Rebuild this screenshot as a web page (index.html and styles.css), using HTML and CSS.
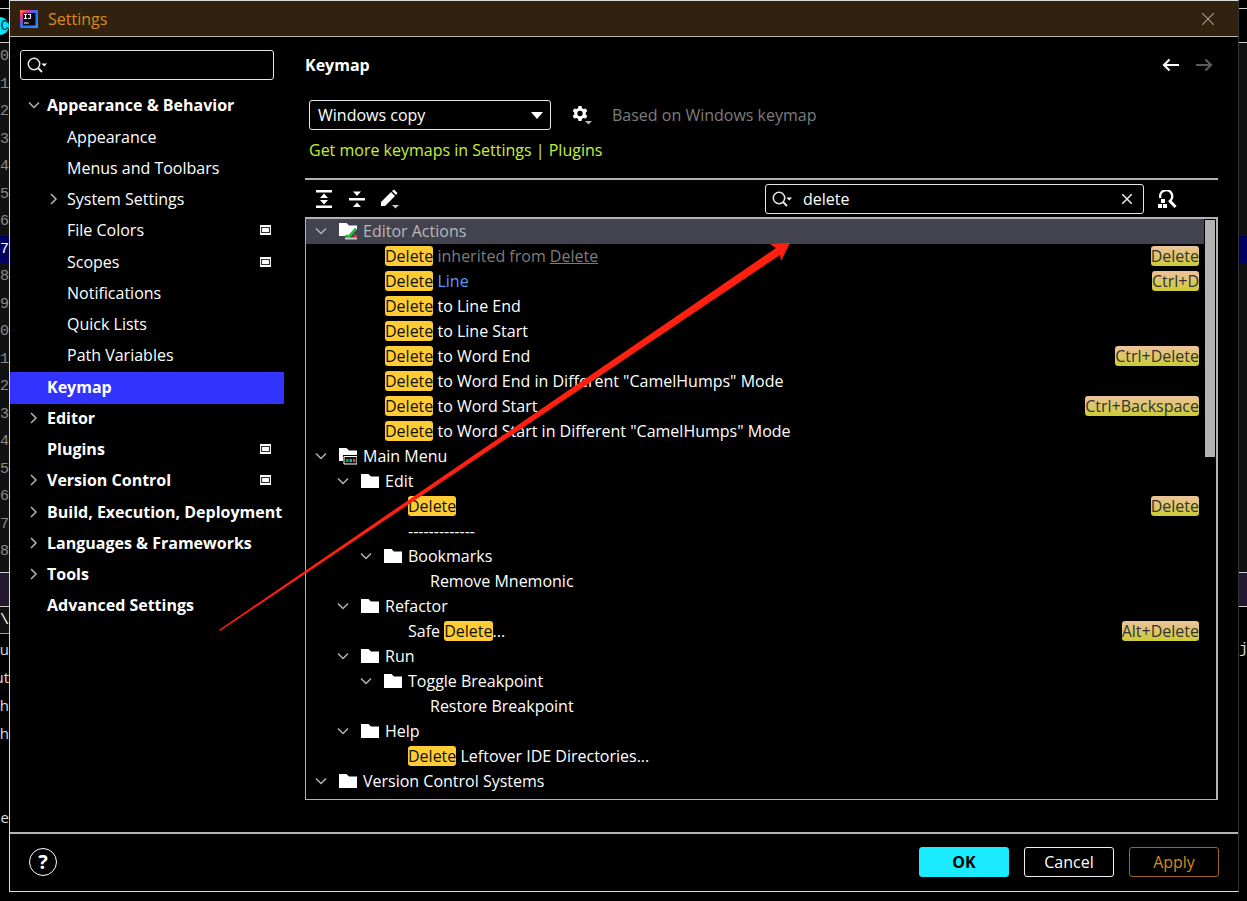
FILE: index.html
```html
<!DOCTYPE html>
<html lang="en">
<head>
<meta charset="utf-8">
<title>Settings</title>
<link rel="stylesheet" href="styles.css">
</head>
<body>
<svg width="0" height="0" class="defs" aria-hidden="true">
  <symbol id="down" viewBox="0 0 12 12"><path d="M1 3.5 6 8.5 11 3.5" fill="none" stroke="#b4b4b4" stroke-width="1.5"/></symbol>
  <symbol id="right" viewBox="0 0 12 12"><path d="M3 1 8 6 3 11" fill="none" stroke="#b4b4b4" stroke-width="1.5"/></symbol>
  <symbol id="folder" viewBox="0 0 18 16"><path d="M0 1H7.500L10 3.500H18V15H0Z" fill="#fff"/></symbol>
  <symbol id="project" viewBox="0 0 11 10"><path d="M0 0H11V10H0Z" fill="#fff"/><path d="M1.500 2.500H9.500V7.500H1.500Z" fill="#fff" stroke="#333" stroke-width="1.200"/></symbol>
  <symbol id="search" viewBox="0 0 20 16"><circle cx="7" cy="7" r="5.700" fill="none" stroke="#e8e8e8" stroke-width="1.500"/><path d="M11 11 15 15" stroke="#e8e8e8" stroke-width="2"/><path d="M14.500 6.500H20L17.200 9.500Z" fill="#fff"/></symbol>
</svg>
<div class="desktop">
  <div class="strip left" aria-hidden="true">
    <div class="tabs"><span class="badge">C</span></div>
    <div class="gutter"><span>0</span><span>1</span><span>2</span><span>3</span><span>4</span><span>5</span><span>6</span><span class="current">7</span><span>8</span><span>9</span><span>0</span><span>1</span><span>2</span><span>3</span><span>4</span><span>5</span><span>6</span><span>7</span><span>8</span></div>
    <div class="toolbar-band"></div>
    <div class="path-row">\</div>
    <div class="console"><span>au</span><span>ut</span><span>h</span><span>h</span><span></span><span></span><span>e</span></div>
  </div>

  <main class="dialog">
    <header class="titlebar">
      <svg class="logo" viewBox="0 0 18 18" width="18" height="18">
        <defs><linearGradient id="lg" x1="0" y1="0" x2="1" y2="1"><stop offset="0" stop-color="#ff8a3c"/><stop offset=".2" stop-color="#f0357a"/><stop offset=".38" stop-color="#7b4fe0"/><stop offset=".5" stop-color="#1a7bf5"/><stop offset="1" stop-color="#2196ff"/></linearGradient></defs>
        <path d="M0 0H18V18H0Z" fill="url(#lg)"/><path d="M3 3H15.500V15.500H3Z" fill="#120612"/>
        <path d="M4 4.500H7M5.500 4.500V8.500M4 8.500H7M8 4.500H10.500V7.500Q10.500 8.500 9.500 8.500H8M4 13H8.500" fill="none" stroke="#fff" stroke-width="1.100"/>
      </svg>
      <h1>Settings</h1>
      <button class="icon-btn close" aria-label="Close"><svg width="12" height="12" viewBox="0 0 12 12"><path d="M0 0 12 12M12 0 0 12" stroke="#a09890" stroke-width="1.200"/></svg></button>
    </header>

    <div class="body">
      <nav class="sidebar" aria-label="Settings categories">
        <label class="field side-search"><svg width="20" height="16"><use href="#search"/></svg><input type="text" aria-label="Search settings"></label>
        <ul class="nav">
          <li class="top"><svg class="chev"><use href="#down"/></svg><span>Appearance &amp; Behavior</span></li>
          <li class="sub"><i class="chev"></i><span>Appearance</span></li>
          <li class="sub"><i class="chev"></i><span>Menus and Toolbars</span></li>
          <li class="sub"><svg class="chev"><use href="#right"/></svg><span>System Settings</span></li>
          <li class="sub"><i class="chev"></i><span>File Colors</span><svg class="proj"><use href="#project"/></svg></li>
          <li class="sub"><i class="chev"></i><span>Scopes</span><svg class="proj"><use href="#project"/></svg></li>
          <li class="sub"><i class="chev"></i><span>Notifications</span></li>
          <li class="sub"><i class="chev"></i><span>Quick Lists</span></li>
          <li class="sub"><i class="chev"></i><span>Path Variables</span></li>
          <li class="top selected"><i class="chev"></i><span>Keymap</span></li>
          <li class="top"><svg class="chev"><use href="#right"/></svg><span>Editor</span></li>
          <li class="top"><i class="chev"></i><span>Plugins</span><svg class="proj"><use href="#project"/></svg></li>
          <li class="top"><svg class="chev"><use href="#right"/></svg><span>Version Control</span><svg class="proj"><use href="#project"/></svg></li>
          <li class="top"><svg class="chev"><use href="#right"/></svg><span>Build, Execution, Deployment</span></li>
          <li class="top"><svg class="chev"><use href="#right"/></svg><span>Languages &amp; Frameworks</span></li>
          <li class="top"><svg class="chev"><use href="#right"/></svg><span>Tools</span></li>
          <li class="top"><i class="chev"></i><span>Advanced Settings</span></li>
        </ul>
      </nav>

      <section class="content">
        <div class="heading">
          <h2>Keymap</h2>
          <button class="icon-btn" aria-label="Back"><svg width="18" height="14" viewBox="0 0 18 14"><path d="M17 7H2M7.500 1.500 2 7 7.500 12.500" fill="none" stroke="#fff" stroke-width="2.200"/></svg></button>
          <button class="icon-btn" aria-label="Forward" disabled><svg width="18" height="14" viewBox="0 0 18 14"><path d="M1 7H16M10.500 1.500 16 7 10.500 12.500" fill="none" stroke="#5c5c5c" stroke-width="2.200"/></svg></button>
        </div>
        <div class="scheme">
          <div class="combo"><select aria-label="Keymap scheme"><option>Windows copy</option></select><svg width="12" height="7" viewBox="0 0 12 7"><path d="M0 0H12L6 7Z" fill="#fff"/></svg></div>
          <button class="icon-btn" aria-label="Scheme actions"><svg width="20" height="20" viewBox="0 0 20 20"><path fill="#fff" fill-rule="evenodd" d="M6.500 1h3l.5 2.200 1.600.9L13.800 3.400l1.500 2.700-1.600 1.500v1.800l1.600 1.500-1.500 2.700-2.200-.7-1.600.9-.5 2.200h-3L6 13.800l-1.600-.9-2.200.7L.7 10.900l1.600-1.500V7.600L.7 6.100l1.500-2.700 2.200.7L6 3.200ZM8 5.800a2.700 2.700 0 1 0 0 5.400 2.700 2.700 0 0 0 0-5.400Z"/><path d="M13 16H20L16.500 19.500Z" fill="#bbb"/></svg></button>
          <span class="note">Based on Windows keymap</span>
        </div>
        <a class="more" href="#plugins">Get more keymaps in Settings | Plugins</a>

        <div class="tools">
          <button class="icon-btn" aria-label="Expand all"><svg width="18" height="18" viewBox="0 0 18 18"><path d="M1 0H17V2.500H1ZM1 15.500H17V18H1ZM9 3.500 13 8H5ZM9 14.500 13 10H5Z" fill="#fff"/></svg></button>
          <button class="icon-btn" aria-label="Collapse all"><svg width="18" height="18" viewBox="0 0 18 18"><path d="M1 8H17V10.500H1ZM9 6 13 1.500H5ZM9 12.500 13 17H5Z" fill="#fff"/></svg></button>
          <button class="icon-btn" aria-label="Edit shortcut"><svg width="18" height="20" viewBox="0 0 18 20"><path d="M0 13 10 3 14 7 4 17H0ZM11 2 13 .5 16.500 4 15 6Z" fill="#fff"/><path d="M11 16H18L14.500 19.500Z" fill="#ccc"/></svg></button>
          <label class="field action-search"><svg width="20" height="16"><use href="#search"/></svg><input type="text" value="delete" aria-label="Search actions"><button class="icon-btn" aria-label="Clear"><svg width="10" height="10" viewBox="0 0 10 10"><path d="M0 0 10 10M10 0 0 10" stroke="#eee" stroke-width="1.500"/></svg></button></label>
          <button class="icon-btn find" aria-label="Find by shortcut"><svg width="20" height="18" viewBox="0 0 20 18"><path d="M3.500 8A6 6 0 1 1 12 11.500" fill="none" stroke="#fff" stroke-width="2.400"/><path d="M12.500 10.500 18.500 17" stroke="#fff" stroke-width="3"/><path d="M4 9H8V13H4ZM1 14H5V18H1ZM6 14H10V18H6Z" fill="#fff"/></svg></button>
        </div>

        <div class="tree">
          <ul class="rows">
            <li class="d0 active"><svg class="chev"><use href="#down"/></svg><svg class="ico" viewBox="0 0 18 18"><path d="M0 1H7.500L10 3.500H18V7L12 14H0Z" fill="#fff"/><path d="M7 13 9 15.500 17 6.500" stroke="#10c030" stroke-width="2.500" fill="none"/><path d="M6 16.500H18" stroke="#ccc" stroke-width="2"/><path d="M15 13H18V15H15Z" fill="#e04040"/></svg><span>Editor Actions</span></li>
            <li class="l1 dim"><span><mark>Delete</mark> inherited from <u>Delete</u></span><kbd>Delete</kbd></li>
            <li class="l1 changed"><span><mark>Delete</mark> Line</span><kbd>Ctrl+D</kbd></li>
            <li class="l1"><span><mark>Delete</mark> to Line End</span></li>
            <li class="l1"><span><mark>Delete</mark> to Line Start</span></li>
            <li class="l1"><span><mark>Delete</mark> to Word End</span><kbd>Ctrl+Delete</kbd></li>
            <li class="l1"><span><mark>Delete</mark> to Word End in Different "CamelHumps" Mode</span></li>
            <li class="l1"><span><mark>Delete</mark> to Word Start</span><kbd>Ctrl+Backspace</kbd></li>
            <li class="l1"><span><mark>Delete</mark> to Word Start in Different "CamelHumps" Mode</span></li>
            <li class="d0"><svg class="chev"><use href="#down"/></svg><svg class="ico" viewBox="0 0 18 18"><path d="M0 1H7.500L10 3.500H18V8H4V14H0Z" fill="#fff"/><path d="M5 9.500H18V17H5Z" fill="#111" stroke="#fff"/><path d="M7 12H9.500V15H7Z" fill="#10b030"/><path d="M10.500 12H13V15H10.500Z" fill="#20a0e0"/><path d="M14 12H16.500V15H14Z" fill="#e04050"/></svg><span>Main Menu</span></li>
            <li class="d1"><svg class="chev"><use href="#down"/></svg><svg class="ico"><use href="#folder"/></svg><span>Edit</span></li>
            <li class="l2"><span><mark>Delete</mark></span><kbd>Delete</kbd></li>
            <li class="l2"><span>-------------</span></li>
            <li class="d2"><svg class="chev"><use href="#down"/></svg><svg class="ico"><use href="#folder"/></svg><span>Bookmarks</span></li>
            <li class="l3"><span>Remove Mnemonic</span></li>
            <li class="d1"><svg class="chev"><use href="#down"/></svg><svg class="ico"><use href="#folder"/></svg><span>Refactor</span></li>
            <li class="l2"><span>Safe <mark>Delete</mark>...</span><kbd>Alt+Delete</kbd></li>
            <li class="d1"><svg class="chev"><use href="#down"/></svg><svg class="ico"><use href="#folder"/></svg><span>Run</span></li>
            <li class="d2"><svg class="chev"><use href="#down"/></svg><svg class="ico"><use href="#folder"/></svg><span>Toggle Breakpoint</span></li>
            <li class="l3"><span>Restore Breakpoint</span></li>
            <li class="d1"><svg class="chev"><use href="#down"/></svg><svg class="ico"><use href="#folder"/></svg><span>Help</span></li>
            <li class="l2"><span><mark>Delete</mark> Leftover IDE Directories...</span></li>
            <li class="d0"><svg class="chev"><use href="#down"/></svg><svg class="ico"><use href="#folder"/></svg><span>Version Control Systems</span></li>
            <li class="d1"><i class="chev"></i><svg class="ico"><use href="#folder"/></svg></li>
          </ul>
          <div class="scroll"><div class="thumb"></div></div>
        </div>
      </section>
    </div>

    <footer class="footer">
      <button class="help" aria-label="Help">?</button>
      <button class="btn ok">OK</button>
      <button class="btn">Cancel</button>
      <button class="btn apply">Apply</button>
    </footer>
  </main>

  <div class="strip right" aria-hidden="true">
    <div class="tabs"></div>
    <div class="gutter"><span></span><span></span><span></span><span></span><span></span><span></span><span></span><span class="current"></span><span></span><span></span><span></span><span></span><span></span><span></span><span></span><span></span><span></span><span></span><span></span></div>
    <div class="toolbar-band"></div>
    <div class="path-row"></div>
    <div class="console"><span>ja</span></div>
  </div>
</div>
<svg class="arrow" width="573" height="390" viewBox="0 0 573 390" aria-hidden="true"><path d="M0 387 557 5 551 1 571 0 562 18 561 12 1 388Z" fill="#ff2010"/></svg>
</body>
</html>
```
FILE: styles.css
```css
* { box-sizing: border-box; }
body {
  margin: 0;
  background: #000;
  color: #fff;
  font: 16px/24px "Open Sans", "Noto Sans", sans-serif;
}
ul { list-style: none; margin: 0; padding: 0; }
h1, h2 { margin: 0; font-size: 16px; }
button, input, select { font: inherit; color: inherit; }
.defs { position: absolute; }

.desktop { display: flex; height: 100vh; overflow: hidden; }

/* IDE window visible behind the dialog */
.strip { width: 9px; flex: none; overflow: hidden; display: flex; flex-direction: column; font: 15px/27px "Liberation Mono", monospace; }
.strip.right { width: 8px; }
.tabs { height: 43px; padding-top: 8px; border-bottom: 1px solid #ccc; background: linear-gradient(#ccc, #ccc) 0 8px / 100% 1px no-repeat; flex: none; }
.badge { display: flex; align-items: center; justify-content: flex-end; width: 18px; height: 18px; margin: 9px 0 0 -9px; border-radius: 9px; background: #00e5ff; color: #002b30; font-size: 14px; }
.gutter { height: 529px; padding-bottom: 6px; display: grid; grid-auto-rows: 1fr; background: #111; color: #8a8a8a; flex: none; }
.gutter .current { background: #000060; color: #fff; }
.toolbar-band { height: 35px; background: #241830; border: solid #ccc; border-width: 1px 0; flex: none; }
.path-row { height: 27px; border-bottom: 1px solid #999; background: #111; flex: none; }
.right .path-row { background: #000; border: 0; }
.console { display: grid; grid-auto-rows: 28px; margin-top: 2px; color: #ddd; }
.left .console { justify-content: end; text-align: right; font-family: "Open Sans", sans-serif; }

.dialog { flex: 1; min-width: 0; display: flex; flex-direction: column; margin-bottom: 9px; border: 1px solid #dcdcdc; border-right-color: #333; background: #000; }

.titlebar { display: flex; align-items: center; height: 36px; padding: 0 24px 0 10px; background: #33210f; border-bottom: 1px solid #b8b4ae; flex: none; }
.titlebar h1 { flex: 1; margin-left: 10px; font-weight: 400; color: #d98a1e; }
.icon-btn { display: flex; align-items: center; justify-content: center; padding: 0; border: 0; background: none; }

.body { flex: 1; min-height: 0; display: flex; }
.sidebar { width: 274px; padding-top: 13px; flex: none; }
.field { display: flex; align-items: center; height: 30px; padding: 0 6px; border: 1px solid #e6e6e6; border-radius: 3px; }
.field input { flex: 1; min-width: 0; padding: 0; border: 0; outline: 0; background: none; }
.side-search { margin: 0 10px 11px; }
.nav li { display: flex; align-items: center; height: 31px; padding: 0 13px 3px 18px; white-space: nowrap; }
.nav li:nth-child(4n+2) { height: 32px; }
.nav span { flex: 1; margin-left: 7px; }
.nav .top { font-weight: 700; }
.nav .sub { padding-left: 38px; }
.nav .selected { padding-bottom: 2px; background: #3333ff; }
.chev { width: 12px; height: 12px; flex: none; }
.proj { width: 11px; height: 10px; flex: none; }

.content { flex: 1; min-width: 0; display: flex; flex-direction: column; padding: 16px 20px 32px 21px; }
.heading { display: flex; align-items: center; gap: 15px; height: 24px; padding-right: 5px; }
.heading h2 { flex: 1; }
.scheme { display: flex; align-items: center; margin: 23px 0 8px 4px; }
.combo { position: relative; width: 242px; margin-right: 21px; }
.combo select { display: block; width: 100%; height: 30px; padding: 0 8px; appearance: none; border: 1px solid #e6e6e6; border-radius: 3px; background: #000; }
.combo svg { position: absolute; right: 8px; top: 12px; pointer-events: none; }
.note { margin-left: 20px; color: #7d7d7d; }
.more { align-self: flex-start; margin-left: 4px; color: #c6f036; text-decoration: none; }
.tools { display: flex; align-items: center; gap: 15px; height: 39px; margin-top: 16px; padding: 0 41px 0 10px; border-top: 2px solid #b3b3b3; flex: none; }
.action-search { width: 379px; margin: 0 -2px 0 auto; padding-right: 11px; }
.action-search input { margin-left: 11px; }

.tree { flex: 1; min-height: 0; display: flex; overflow: hidden; border: solid #b3b3b3; border-width: 2px 2px 1px 1px; }
.rows { flex: 1; min-width: 0; }
.rows li { display: flex; align-items: center; height: 25px; padding: 0 5px 2px 0; white-space: nowrap; }
.rows span { flex: 1; }
.rows .chev { margin-right: 12px; }
.rows .d0 { padding-left: 9px; }
.rows .d1 { padding-left: 31px; }
.rows .d2 { padding-left: 54px; }
.rows .l1 { padding-left: 79px; }
.rows .l2 { padding-left: 102px; }
.rows .l3 { padding-left: 124px; }
.ico { width: 18px; height: 18px; margin-right: 6px; flex: none; }
.rows .active { background: #43434f; color: #b8b8b8; }
.rows .dim { color: #7d7d7d; }
.rows .changed { color: #5a9bff; }
mark { display: inline-block; line-height: 20px; border-radius: 3px; background: #ffcc33; color: #111; }
kbd { font: inherit; line-height: 20px; border-radius: 3px; background: linear-gradient(#eec29c, #cccc33); color: #333; }
.scroll { width: 12px; padding: 1px 1px 0; flex: none; }
.thumb { height: 41%; background: #b3b3b3; }

.footer { display: flex; align-items: center; gap: 15px; height: 59px; padding: 0 19px 1px 19px; border-top: 2px solid #b3b3b3; flex: none; }
.help { width: 28px; height: 28px; margin-right: auto; padding: 0; border: 1px solid #fff; border-radius: 14px; background: none; font-size: 20px; font-weight: 700; line-height: 24px; }
.btn { width: 90px; height: 30px; padding: 0; border: 1px solid #f0f0f0; border-radius: 3px; background: #000; }
.ok { border-color: #1aebff; background: #1aebff; color: #000; font-weight: 700; }
.apply { border-color: #a0651a; color: #d98a1e; }

.arrow { position: absolute; left: 219px; top: 243px; pointer-events: none; }
```
